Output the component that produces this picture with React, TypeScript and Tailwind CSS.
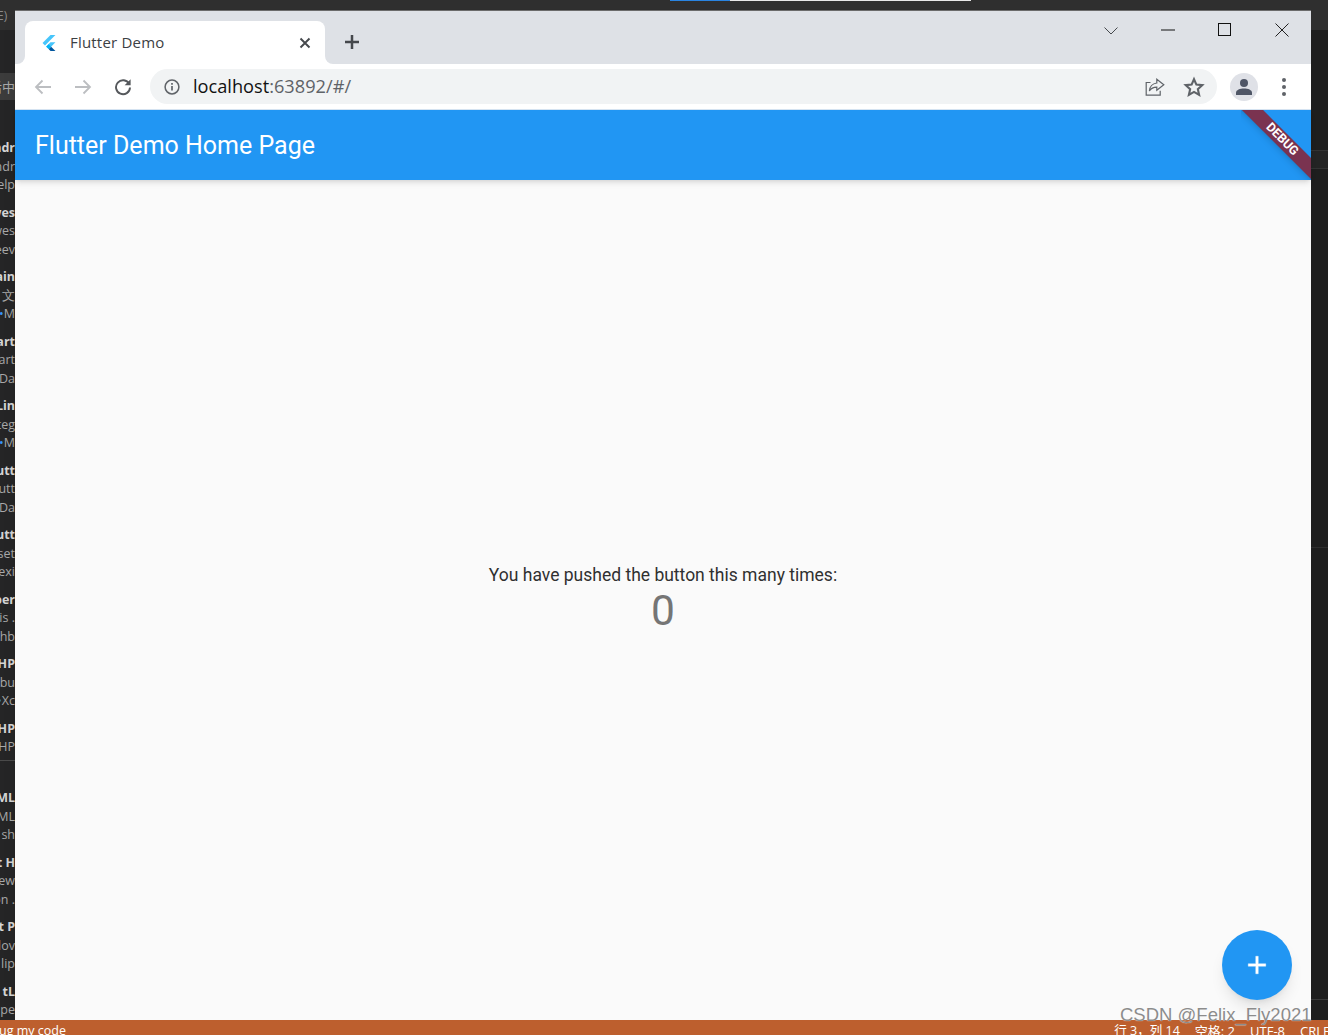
const sidebarTop = [
  ["ndr", "ndr", "elp"],
  ["wes", "wes", "eev"],
  ["ain", "文", "•M"],
  ["art", "art", "•Da"],
  ["SLin", "teg", "•M"],
  ["utt", "utt", "•Da"],
  ["utt", "set", "exi"],
  ["per", "is .", "chb"],
  ["HP", "ebu", "•Xc"],
  ["HP", "HP"],
];

const sidebarBottom = [
  ["ML", "ML", "sh"],
  ["t H", "ew", "on ."],
  ["t P", "lov", "lip"],
  ["tL", "pe"],
];

const SidebarGroup = ({ lines }: { lines: string[] }) => (
  <div className="h-[64.5px] shrink-0">
    {lines.map((line, index) => (
      <div
        key={index}
        className={`flex justify-end h-[18.5px] leading-[18.5px] whitespace-nowrap ${
          index === 0 ? "font-bold text-[#d4d4d4]" : "text-[#a8a8a8]"
        }`}
      >
        {line.startsWith("•") ? (
          <span>
            <span className="text-[#3794ff]">•</span>
            {line.slice(1)}
          </span>
        ) : (
          <span>{line}</span>
        )}
      </div>
    ))}
  </div>
);

const Sidebar = () => (
  <div className="w-[15px] shrink-0 overflow-hidden bg-[#252526] flex flex-col text-[12.5px] font-['Open_Sans',sans-serif]">
    <div className="h-5 shrink-0 bg-[#2f2f2f] text-[12px] leading-[12px] text-[#8a8a8a] flex justify-start">
      <span className="-ml-[3px]">E)</span>
    </div>
    <div className="h-[43px] shrink-0" />
    <div className="h-[27px] shrink-0 bg-[#3c3c3c] flex justify-end items-center text-[#a8a8a8] text-[13px] whitespace-nowrap font-['Noto_Sans_CJK_SC',sans-serif]">
      <span>后中</span>
    </div>
    <div className="h-[39px] shrink-0" />
    {sidebarTop.map((lines, index) => (
      <SidebarGroup key={index} lines={lines} />
    ))}
    <div className="h-px shrink-0 bg-[#4a4a4a] -mt-[24px]" />
    <div className="h-[28px] shrink-0" />
    {sidebarBottom.map((lines, index) => (
      <SidebarGroup key={index} lines={lines} />
    ))}
  </div>
);

const RightStrip = () => (
  <div className="w-[17px] shrink-0 bg-[#1e1e1e] flex flex-col">
    <div className="h-5 bg-[#2f2f2f]" />
    <div className="h-[120px]" />
    <div className="h-[19px] bg-[#242424] border-y border-[#333333]" />
    <div className="h-[379px] border-b border-[#2e2e2e]" />
    <div className="h-[452px] border-b border-[#3a3a3a]" />
  </div>
);

const FlutterLogo = () => (
  <svg viewBox="0 0 256 317" className="w-[14px] h-[16px]">
    <path d="M157.665 0L0 157.666l48.801 48.801L255.267 0z" fill="#47C5FB" />
    <path d="M156.567 145.396l-84.418 84.419 48.983 49.7 48.71-48.71 85.425-85.409z" fill="#47C5FB" />
    <path d="M121.133 279.516l37.082 37.083h97.052l-85.425-85.792z" fill="#00569E" />
    <path d="M71.6 230.364l48.801-48.801 49.441 49.24-48.71 48.71z" fill="#00B5F8" />
  </svg>
);

const Tab = () => (
  <div className="relative w-[300px] h-[43px] bg-white rounded-t-lg flex items-center pl-[17px] pr-[13px]">
    <div className="absolute -left-2 bottom-0 w-2 h-2 bg-white">
      <div className="w-full h-full bg-[#dee1e6] rounded-br-lg" />
    </div>
    <div className="absolute -right-2 bottom-0 w-2 h-2 bg-white">
      <div className="w-full h-full bg-[#dee1e6] rounded-bl-lg" />
    </div>
    <FlutterLogo />
    <span className="ml-[14px] flex-1 text-[15px] tracking-[0.2px] text-[#3c4043] font-['Open_Sans',sans-serif]">Flutter Demo</span>
    <svg viewBox="0 0 14 14" className="w-[14px] h-[14px]" fill="none" stroke="#45484c" strokeWidth="1.9">
      <path d="M2.5 2.5l9 9M11.5 2.5l-9 9" />
    </svg>
  </div>
);

const TabStrip = () => (
  <div className="h-[53px] shrink-0 bg-[#dee1e6] flex items-start pt-[10px] pl-[10px]">
    <Tab />
    <svg viewBox="0 0 16 16" className="w-4 h-4 ml-[19px] mt-[13px]" fill="none" stroke="#45484c" strokeWidth="2.5">
      <path d="M8 1v14M1 8h14" />
    </svg>
    <div className="ml-auto flex items-start pt-[1px]">
      <svg viewBox="0 0 14 8" className="w-[14px] h-2 mt-[5px]" fill="none" stroke="#45484c" strokeWidth="1">
        <path d="M.5.5L7 7 13.5.5" />
      </svg>
      <svg viewBox="0 0 14 2" className="w-[14px] h-0.5 ml-[43px] mt-[7px]" fill="none" stroke="#111" strokeWidth="1">
        <path d="M0 1h14" />
      </svg>
      <svg viewBox="0 0 13 13" className="w-[13px] h-[13px] ml-[43px] mt-[1px]" fill="none" stroke="#111" strokeWidth="1">
        <rect x=".5" y=".5" width="12" height="12" />
      </svg>
      <svg viewBox="0 0 14 14" className="w-[14px] h-[14px] ml-[44px] mr-[22px] mt-[1px]" fill="none" stroke="#222" strokeWidth="1">
        <path d="M.5.5l13 13M13.5.5l-13 13" />
      </svg>
    </div>
  </div>
);

const Toolbar = () => (
  <div className="h-[46px] shrink-0 bg-white border-b border-[#d6e4f2] flex items-center pl-[19px] pr-[25px]">
    <svg viewBox="0 0 18 16" className="w-[18px] h-4" fill="none" stroke="#bcbec1" strokeWidth="1.8">
      <path d="M17 8H2M8.5 1.5L2 8l6.5 6.5" />
    </svg>
    <svg viewBox="0 0 18 16" className="w-[18px] h-4 ml-[22px]" fill="none" stroke="#bcbec1" strokeWidth="1.8">
      <path d="M1 8h15M9.5 1.5L16 8l-6.5 6.5" />
    </svg>
    <svg viewBox="0 0 18 18" className="w-[18px] h-[18px] ml-[22px]" fill="none" stroke="#55585c" strokeWidth="1.9">
      <path d="M15.2 6A7 7 0 1 0 16 9.5" />
      <path d="M16.6 1.2v6h-6z" fill="#55585c" stroke="none" />
    </svg>
    <div className="ml-[18px] flex-1 h-[35px] rounded-full bg-[#f1f3f4] flex items-center pl-[14px] pr-[9px]">
      <svg viewBox="0 0 16 16" className="w-4 h-4" fill="none" stroke="#5f6368" strokeWidth="1.5">
        <circle cx="8" cy="8" r="6.9" />
        <path d="M8 7v4.6" strokeWidth="1.7" />
        <path d="M8 4v1.8" strokeWidth="1.7" />
      </svg>
      <span className="ml-[13px] text-[18.2px] font-['Open_Sans',sans-serif] text-[#111111]">
        localhost<span className="text-[#5f6368]">:63892/#/</span>
      </span>
      <svg viewBox="0 0 20 18" className="w-5 h-[18px] ml-auto" fill="none" stroke="#5f6368" strokeWidth="1.2">
        <path d="M5.5 4.5H1.2v12.6h14v-4.3" />
        <path d="M11.8 1.2L18.8 6.8l-7 5.4V9.2C8.4 9.2 6 10.4 4.4 13c.2-4 3-7.4 7.4-8z" />
      </svg>
      <svg viewBox="0 0 24 24" className="w-[22px] h-[22px] ml-[18px] mr-[3px]" fill="none" stroke="#5f6368" strokeWidth="2.3" strokeLinejoin="miter">
        <path d="M12 3.5l2.6 5.9 6.4.6-4.8 4.3 1.4 6.3L12 17.4l-5.6 3.2 1.4-6.3L3 10l6.4-.6z" />
      </svg>
    </div>
    <div className="ml-[13px] w-7 h-7 rounded-full bg-[#dfe1e7] flex items-center justify-center">
      <svg viewBox="0 0 18 18" className="w-[18px] h-[18px]" fill="#4f5666">
        <circle cx="9" cy="5" r="4" />
        <path d="M1 17v-2.2C1 12 5 10.6 9 10.6s8 1.4 8 4.2V17z" />
      </svg>
    </div>
    <div className="ml-[24px] w-1 flex flex-col gap-[3px]">
      <div className="w-1 h-1 rounded-full bg-[#5f6368]" />
      <div className="w-1 h-1 rounded-full bg-[#5f6368]" />
      <div className="w-1 h-1 rounded-full bg-[#5f6368]" />
    </div>
  </div>
);

const DebugBanner = () => (
  <div className="absolute top-0 right-0 w-[70px] h-[70px] overflow-hidden">
    <div className="absolute left-[-19px] top-[22px] w-[120px] h-[15px] rotate-45 bg-[#7a3350] shadow-md flex items-center justify-center text-white text-[12.5px] font-bold font-['Roboto',sans-serif]">
      DEBUG
    </div>
  </div>
);

const FlutterApp = () => (
  <div className="flex-1 flex flex-col relative bg-[#fafafa] font-['Roboto',sans-serif]">
    <div className="relative z-10 h-[70px] shrink-0 bg-[#2196f3] shadow-md flex items-center pl-5 pt-[2px] text-white text-[25px]">
      Flutter Demo Home Page
      <DebugBanner />
    </div>
    <div className="flex-1 flex flex-col items-center justify-center">
      <div className="text-[17.5px] leading-[21px] text-[#303030]">You have pushed the button this many times:</div>
      <div className="text-[42.5px] leading-[50px] text-[#757575]">0</div>
    </div>
    <button className="absolute right-[19px] bottom-5 w-[70px] h-[70px] rounded-full bg-[#2196f3] shadow-lg flex items-center justify-center">
      <svg viewBox="0 0 24 24" className="w-[30px] h-[30px]" fill="white" stroke="white" strokeWidth="0.3">
        <path d="M19 13h-6v6h-2v-6H5v-2h6V5h2v6h6v2z" />
      </svg>
    </button>
  </div>
);

const App = () => {
  return (
    <div className="relative w-[1328px] h-[1035px] overflow-hidden bg-[#2f2f2f] flex flex-col">
      <div className="h-[10px] shrink-0 flex items-start pl-[670px]">
        <div className="w-[60px] h-px bg-[#2a84e0]" />
        <div className="w-[241px] h-px bg-[#e8e8e8]" />
      </div>
      <div className="flex-1 flex min-h-0">
        <Sidebar />
        <div className="flex-1 flex flex-col border-t border-[#6b6b6b] shadow-lg">
          <TabStrip />
          <Toolbar />
          <FlutterApp />
        </div>
        <RightStrip />
      </div>
      <div className="h-[15px] shrink-0 bg-[#bd5f2e] overflow-hidden flex items-start text-white text-[13px] leading-[22px] whitespace-nowrap font-['Open_Sans','Noto_Sans_CJK_SC',sans-serif]">
        <span className="-ml-[1px] text-[12.5px]">ug my code</span>
        <span className="ml-auto text-[12.5px]">行 3，列 14</span>
        <span className="ml-[15px]">空格: 2</span>
        <span className="ml-[15px]">UTF-8</span>
        <span className="ml-[15px] w-[28px] overflow-hidden">CRLF</span>
      </div>
      <div className="absolute left-[1120px] top-[1003px] text-[18.5px] leading-6 whitespace-nowrap text-[#8c8c8c] [text-shadow:0_0_1px_#ffffff] font-['Liberation_Sans',sans-serif]">
        CSDN @Felix_Fly2021
      </div>
    </div>
  );
};

export default App;
